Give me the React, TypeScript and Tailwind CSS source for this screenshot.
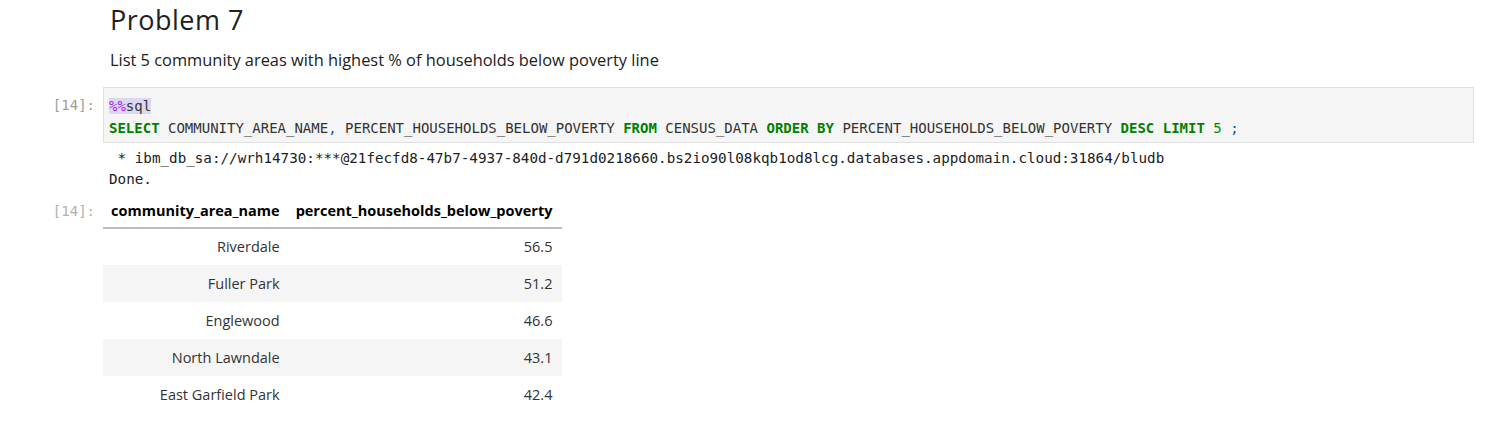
const rows: { name: string; pct: string }[] = [
  { name: "Riverdale", pct: "56.5" },
  { name: "Fuller Park", pct: "51.2" },
  { name: "Englewood", pct: "46.6" },
  { name: "North Lawndale", pct: "43.1" },
  { name: "East Garfield Park", pct: "42.4" },
];

const mono = "font-['DejaVu_Sans_Mono',monospace]";

function Prompt({ label, light }: { label?: string; light?: boolean }) {
  return (
    <div
      className={`w-[103px] shrink-0 pr-[8px] text-right text-[14px] leading-[22px] ${mono} ${
        light ? "text-[#b0b0b0]" : "text-[#9e9e9e]"
      }`}
    >
      {label}
    </div>
  );
}

export default function App() {
  return (
    <div className="w-[1491px] h-[426px] bg-white overflow-hidden font-['Open_Sans',sans-serif] text-[#212121]">
      {/* Markdown cell */}
      <div className="pl-[110px] pt-[3px]">
        <h2 className="text-[27px] leading-[34px] font-normal tracking-[0.5px]">Problem 7</h2>
        <p className="mt-[12px] text-[16.4px] leading-[22px]">
          List 5 community areas with highest % of households below poverty line
        </p>
      </div>

      {/* Code cell */}
      <div className="flex mt-[16px] pr-[17px]">
        <div className="pt-[7px]">
          <Prompt label="[14]:" />
        </div>
        <div
          className={`flex-1 border border-[#e0e0e0] bg-[#f5f5f5] px-[5px] pt-[7px] pb-[3px] text-[14px] leading-[22px] text-[#333] ${mono}`}
        >
          <div>
            <span className="bg-[#dcd8f2]">
              <span className="text-[#aa22ff]">%%</span>sql
            </span>
          </div>
          <div className="whitespace-pre">
            <span className="font-bold text-[#008000]">SELECT</span> COMMUNITY_AREA_NAME
            <span className="text-[#0055aa]">,</span> PERCENT_HOUSEHOLDS_BELOW_POVERTY{" "}
            <span className="font-bold text-[#008000]">FROM</span> CENSUS_DATA{" "}
            <span className="font-bold text-[#008000]">ORDER</span>{" "}
            <span className="font-bold text-[#008000]">BY</span> PERCENT_HOUSEHOLDS_BELOW_POVERTY{" "}
            <span className="font-bold text-[#008000]">DESC</span>{" "}
            <span className="font-bold text-[#008000]">LIMIT</span>{" "}
            <span className="text-[#008800]">5</span>{" "}
            <span className="text-[#0055aa]">;</span>
          </div>
        </div>
      </div>

      {/* stream output */}
      <div className="flex mt-[5px]">
        <Prompt />
        <div className={`pl-[6px] text-[14.25px] leading-[21px] text-[#212121] whitespace-pre ${mono}`}>
          <div> * ibm_db_sa://wrh14730:***@21fecfd8-47b7-4937-840d-d791d0218660.bs2io90l08kqb1od8lcg.databases.appdomain.cloud:31864/bludb</div>
          <div>Done.</div>
        </div>
      </div>

      {/* table output */}
      <div className="flex mt-[5px]">
        <div className="pt-[5px]">
          <Prompt label="[14]:" light />
        </div>
        <table className="border-collapse text-[14.5px] text-right">
          <thead>
            <tr className="border-b-2 border-[#bdbdbd]">
              <th className="px-[8px] h-[33px] font-bold text-[#000]">community_area_name</th>
              <th className="pl-[8px] pr-[10px] h-[33px] font-bold text-[#000]">percent_households_below_poverty</th>
            </tr>
          </thead>
          <tbody>
            {rows.map((r, i) => (
              <tr key={r.name} className={i % 2 === 1 ? "bg-[#f5f5f5]" : "bg-white"}>
                <td className="px-[8px] h-[37px] text-[#333]">{r.name}</td>
                <td className="pl-[8px] pr-[10px] h-[37px] text-[#333]">{r.pct}</td>
              </tr>
            ))}
          </tbody>
        </table>
      </div>
    </div>
  );
}
